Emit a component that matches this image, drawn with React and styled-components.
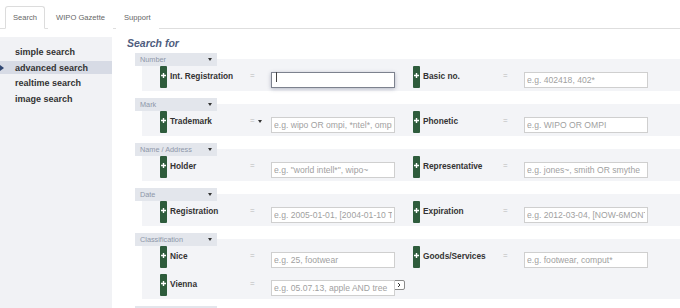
import React from "react";
import styled, { createGlobalStyle } from "styled-components";

const Global = createGlobalStyle`
  html, body { margin: 0; padding: 0; background: #fff; }
  body { font-family: "Liberation Sans", Arial, sans-serif; overflow: hidden; }
  * { box-sizing: border-box; }
`;

const Page = styled.div`
  width: 680px;
  height: 308px;
  overflow: hidden;
`;

const TabBar = styled.div`
  display: flex;
  gap: 3px;
  height: 29px;
  padding: 6px 0 0 5px;
  border-bottom: 1px solid #dedede;
`;

const Tab = styled.div`
  height: 23px;
  padding: 0 7px;
  line-height: 22px;
  font-size: 7.6px;
  color: #666;
  border: 1px solid ${(p) => (p.$active ? "#dcdcdc" : "transparent")};
  border-bottom-color: ${(p) => (p.$active ? "#fff" : "transparent")};
  border-radius: 3px 3px 0 0;
  background: #fff;
`;

const Body = styled.div`
  display: flex;
  margin-top: 8px;
`;

const Sidebar = styled.div`
  width: 112px;
  flex-shrink: 0;
  height: 271px;
  background: #f1f2f5;
  padding-top: 8.5px;
  display: flex;
  flex-direction: column;
  gap: 2.5px;
`;

const NavItem = styled.div`
  display: flex;
  align-items: center;
  height: 13px;
  font-size: 9px;
  font-weight: bold;
  color: #333;
  background: ${(p) => (p.$active ? "#d7dbe5" : "transparent")};
`;

const Marker = styled.span`
  width: 15px;
  flex-shrink: 0;
  display: flex;
  align-items: center;
  &::before {
    content: "";
    display: ${(p) => (p.$show ? "block" : "none")};
    border-top: 3px solid transparent;
    border-bottom: 3px solid transparent;
    border-left: 4px solid #2f4672;
  }
`;

const Main = styled.div`
  flex: 1;
  padding-left: 15px;
`;

const Title = styled.div`
  font-size: 10.5px;
  line-height: 12px;
  font-weight: bold;
  font-style: italic;
  color: #4f5d7e;
  margin-bottom: 3.5px;
`;

const Group = styled.div`
  margin-left: 8px;
  margin-bottom: 7px;
`;

const GroupHeader = styled.div`
  position: relative;
  z-index: 1;
  width: 82px;
  height: 13px;
  padding: 0 5px;
  display: flex;
  align-items: center;
  justify-content: space-between;
  background: #e3e6ec;
  color: #8e97a9;
  font-size: 7.3px;
`;

const Caret = styled.span`
  width: 0;
  height: 0;
  border-left: 2.5px solid transparent;
  border-right: 2.5px solid transparent;
  border-top: 3px solid #333;
`;

const Panel = styled.div`
  margin-left: 7px;
  margin-top: -7px;
  padding: 7px 0 3px 18px;
  background: #f3f4f7;
  display: flex;
  flex-direction: column;
  gap: 6px;
`;

const Row = styled.div`
  display: flex;
  gap: 18px;
  height: 22px;
`;

const Field = styled.div`
  display: flex;
  align-items: center;
  width: 235px;
  flex-shrink: 0;
  & > * { flex-shrink: 0; }
`;

const AddBtn = styled.div`
  width: 7px;
  height: 22px;
  background: #2e5c3c;
  border-radius: 1px;
  display: flex;
  align-items: center;
  justify-content: center;
  padding-bottom: 3px;
`;

const Label = styled.div`
  margin-left: 3px;
  width: 80px;
  font-size: 8.3px;
  font-weight: bold;
  color: #333;
  white-space: nowrap;
  padding-bottom: 2px;
`;

const Eq = styled.div`
  width: 21px;
  font-size: 8px;
  color: #b8b8b8;
  display: flex;
  align-items: center;
  gap: 3px;
  padding-bottom: 3px;
`;

const SmallCaret = styled(Caret)`
  border-top-color: #333;
  margin-top: 2px;
`;

const InputWrap = styled.div`
  position: relative;
  width: 124px;
  height: 16px;
`;

const Input = styled.input`
  width: 124px;
  height: 16px;
  border: 1px solid ${(p) => (p.$focus ? "#7d828e" : "#cfcfcf")};
  box-shadow: ${(p) => (p.$focus ? "0 1px 4px rgba(30,40,80,0.3)" : "none")};
  padding: 0 2px;
  font-family: "Liberation Sans", Arial, sans-serif;
  font-size: 8.6px;
  color: #333;
  background: #fff;
  outline: none;
  &::placeholder { color: #9f9f9f; }
`;

const TextCaret = styled.span`
  position: absolute;
  left: 5px;
  top: 3px;
  width: 1px;
  height: 10px;
  background: #444;
`;

const NextBtn = styled.div`
  width: 12px;
  height: 10px;
  margin-left: -2px;
  border: 1px solid #8a8a8a;
  border-radius: 2px;
  background: #fff;
  display: flex;
  align-items: center;
  justify-content: center;
`;

const Plus = () => (
  <svg width="5" height="5" viewBox="0 0 5 5">
    <path d="M2.5 0v5M0 2.5h5" stroke="#fff" strokeWidth="1.4" />
  </svg>
);

const Chevron = () => (
  <svg width="4" height="6" viewBox="0 0 4 6">
    <path d="M1 1l2 2-2 2" fill="none" stroke="#333" strokeWidth="1" />
  </svg>
);

const FieldItem = ({ label, placeholder, focus, dropdown, next }) => (
  <Field>
    <AddBtn>
      <Plus />
    </AddBtn>
    <Label>{label}</Label>
    <Eq>
      =
      {dropdown && <SmallCaret />}
    </Eq>
    <InputWrap>
      <Input $focus={focus} placeholder={placeholder} readOnly />
      {focus && <TextCaret />}
    </InputWrap>
    {next && (
      <NextBtn>
        <Chevron />
      </NextBtn>
    )}
  </Field>
);

const groups = [
  {
    title: "Number",
    rows: [
      [
        { label: "Int. Registration", placeholder: "", focus: true },
        { label: "Basic no.", placeholder: "e.g. 402418, 402*" },
      ],
    ],
  },
  {
    title: "Mark",
    rows: [
      [
        { label: "Trademark", placeholder: "e.g. wipo OR ompi, *ntel*, ompi~", dropdown: true },
        { label: "Phonetic", placeholder: "e.g. WIPO OR OMPI" },
      ],
    ],
  },
  {
    title: "Name / Address",
    rows: [
      [
        { label: "Holder", placeholder: 'e.g. "world intell*", wipo~' },
        { label: "Representative", placeholder: "e.g. jones~, smith OR smythe" },
      ],
    ],
  },
  {
    title: "Date",
    rows: [
      [
        { label: "Registration", placeholder: "e.g. 2005-01-01, [2004-01-10 TO 2005-01-01]" },
        { label: "Expiration", placeholder: "e.g. 2012-03-04, [NOW-6MONTHS TO NOW]" },
      ],
    ],
  },
  {
    title: "Classification",
    rows: [
      [
        { label: "Nice", placeholder: "e.g. 25, footwear" },
        { label: "Goods/Services", placeholder: "e.g. footwear, comput*" },
      ],
      [{ label: "Vienna", placeholder: "e.g. 05.07.13, apple AND tree", next: true }],
    ],
  },
];

const nav = ["simple search", "advanced search", "realtime search", "image search"];

export default function App() {
  return (
    <Page>
      <Global />
      <TabBar>
        <Tab $active>Search</Tab>
        <Tab>WIPO Gazette</Tab>
        <Tab>Support</Tab>
      </TabBar>
      <Body>
        <Sidebar>
          {nav.map((n, i) => (
            <NavItem key={n} $active={i === 1}>
              <Marker $show={i === 1} />
              {n}
            </NavItem>
          ))}
        </Sidebar>
        <Main>
          <Title>Search for</Title>
          {groups.map((g) => (
            <Group key={g.title}>
              <GroupHeader>
                {g.title}
                <Caret />
              </GroupHeader>
              <Panel>
                {g.rows.map((r, ri) => (
                  <Row key={ri}>
                    {r.map((f) => (
                      <FieldItem key={f.label} {...f} />
                    ))}
                  </Row>
                ))}
              </Panel>
            </Group>
          ))}
          <Group>
            <GroupHeader />
          </Group>
        </Main>
      </Body>
    </Page>
  );
}
